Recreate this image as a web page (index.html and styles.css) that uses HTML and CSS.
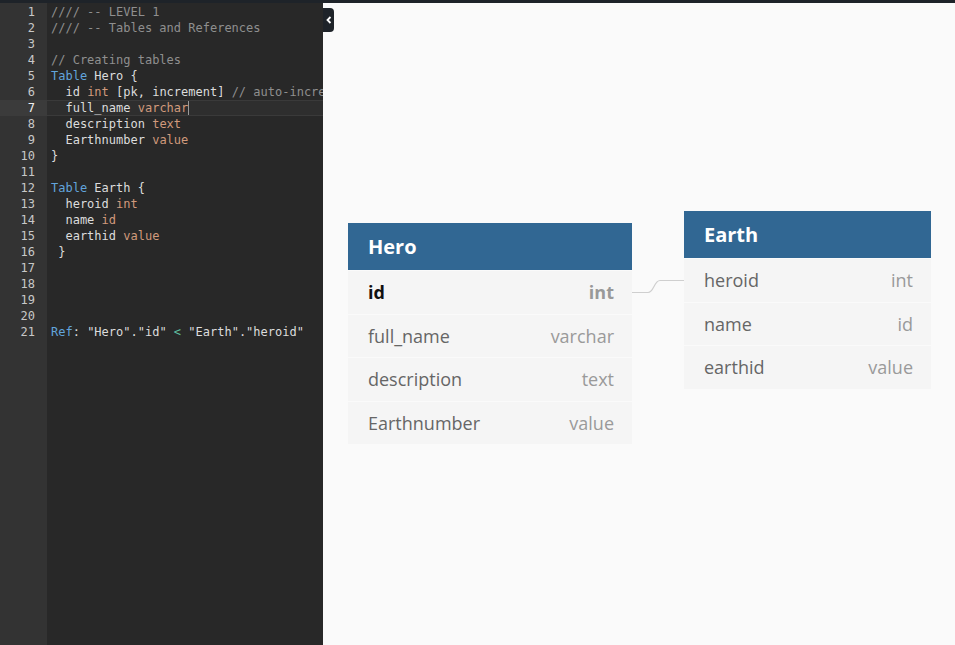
FILE: index.html
```html
<!DOCTYPE html>
<html>
<head>
<meta charset="utf-8">
<link rel="stylesheet" href="styles.css">
</head>
<body>
<div class="topbar"></div>
<div class="main">
  <div class="editor">
    <div class="gutter">
      <div class="ln">1</div><div class="ln">2</div><div class="ln">3</div><div class="ln">4</div><div class="ln">5</div><div class="ln">6</div><div class="ln active">7</div><div class="ln">8</div><div class="ln">9</div><div class="ln">10</div><div class="ln">11</div><div class="ln">12</div><div class="ln">13</div><div class="ln">14</div><div class="ln">15</div><div class="ln">16</div><div class="ln">17</div><div class="ln">18</div><div class="ln">19</div><div class="ln">20</div><div class="ln">21</div>
    </div>
    <div class="code">
      <div class="line"><span class="cm">//// -- LEVEL 1</span></div>
      <div class="line"><span class="cm">//// -- Tables and References</span></div>
      <div class="line"> </div>
      <div class="line"><span class="cm">// Creating tables</span></div>
      <div class="line"><span class="kw">Table</span> Hero {</div>
      <div class="line">  id <span class="ty">int</span> [pk, increment] <span class="cm">// auto-increment</span></div>
      <div class="line active">  full_name <span class="ty">varchar</span><span class="cursor"></span></div>
      <div class="line">  description <span class="ty">text</span></div>
      <div class="line">  Earthnumber <span class="ty">value</span></div>
      <div class="line">}</div>
      <div class="line"> </div>
      <div class="line"><span class="kw">Table</span> Earth {</div>
      <div class="line">  heroid <span class="ty">int</span></div>
      <div class="line">  name <span class="ty">id</span></div>
      <div class="line">  earthid <span class="ty">value</span></div>
      <div class="line"> }</div>
      <div class="line"> </div>
      <div class="line"> </div>
      <div class="line"> </div>
      <div class="line"> </div>
      <div class="line"><span class="kw">Ref</span>: "Hero"."id" <span class="op">&lt;</span> "Earth"."heroid"</div>
    </div>
  </div>
  <div class="canvas">
    <button class="collapse" aria-label="collapse">
      <svg width="6" height="8" viewBox="0 0 6 8"><path d="M4.5 1 L1.5 4 L4.5 7" fill="none" stroke="#fff" stroke-width="1.8"/></svg>
    </button>
    <svg class="link" width="955" height="645">
      <path d="M632 292.5 H648 C654 292.5 654 280.5 660 280.5 H684" fill="none" stroke="#cfcfcf" stroke-width="1.2"/>
    </svg>
    <div class="table hero">
      <div class="thead">Hero</div>
      <div class="row pk"><span class="name">id</span><span class="type">int</span></div>
      <div class="row"><span class="name">full_name</span><span class="type">varchar</span></div>
      <div class="row"><span class="name">description</span><span class="type">text</span></div>
      <div class="row"><span class="name">Earthnumber</span><span class="type">value</span></div>
    </div>
    <div class="table earth">
      <div class="thead">Earth</div>
      <div class="row"><span class="name">heroid</span><span class="type">int</span></div>
      <div class="row"><span class="name">name</span><span class="type">id</span></div>
      <div class="row"><span class="name">earthid</span><span class="type">value</span></div>
    </div>
  </div>
</div>
</body>
</html>
```

FILE: styles.css
```css
* { box-sizing: border-box; }
html, body { margin: 0; padding: 0; height: 100%; overflow: hidden; }
body { background: #fafafa; font-family: "Open Sans", sans-serif; }

.topbar { height: 3px; background: #1e2329; }

.main { display: flex; height: calc(100% - 3px); }

.editor {
  width: 323px;
  flex: none;
  display: flex;
  background: #282828;
  font-family: "DejaVu Sans Mono", monospace;
  font-size: 12px;
  line-height: 16px;
  overflow: hidden;
}

.gutter {
  width: 47px;
  flex: none;
  padding-top: 1px;
  background: #333333;
  color: #c8c8c8;
  text-align: right;
}
.ln { padding-right: 12px; height: 16px; }
.ln.active { background: #3b3b3b; color: #f0f0f0; }

.code { flex: 1; min-width: 0; padding-top: 1px; color: #dcdcdc; overflow: hidden; }
.line { padding-left: 4px; height: 16px; white-space: pre; overflow: hidden; }
.line.active { background: #2e2e2e; box-shadow: inset 0 1px 0 #3a3a3a, inset 0 -1px 0 #3a3a3a; }
.cm { color: #8f8f8f; }
.kw { color: #62a4dc; }
.ty { color: #d19a7c; }
.op { color: #5fbf9f; }
.cursor { display: inline-block; width: 1px; height: 14px; background: #9a9a9a; vertical-align: -3px; }

.canvas { position: relative; flex: 1; background: #fafafa; }

.collapse {
  position: absolute;
  left: 0; top: 5px;
  width: 11px; height: 24px;
  padding: 0; border: 0;
  background: #1e2329;
  border-radius: 0 4px 4px 0;
  display: flex; align-items: center; justify-content: center;
}

.link { position: absolute; left: -323px; top: -3px; pointer-events: none; }

.table { position: absolute; background: #f5f5f5; }
.hero { left: 25px; top: 220px; width: 284px; }
.earth { left: 361px; top: 208px; width: 247px; }

.thead {
  height: 47px;
  background: #316793;
  color: #ffffff;
  font-weight: 700;
  font-size: 20px;
  display: flex; align-items: center;
  padding-left: 20px;
}

.row {
  height: 43.5px;
  display: flex; align-items: center; justify-content: space-between;
  padding: 0 18px 0 20px;
  font-size: 18px;
  border-top: 1px solid #fafafa;
}
.row:first-of-type { border-top: 0; }
.name { color: #666666; }
.type { color: #9a9a9a; }
.pk .name { color: #111111; font-weight: 700; }
.pk .type { color: #999999; font-weight: 700; }
```
